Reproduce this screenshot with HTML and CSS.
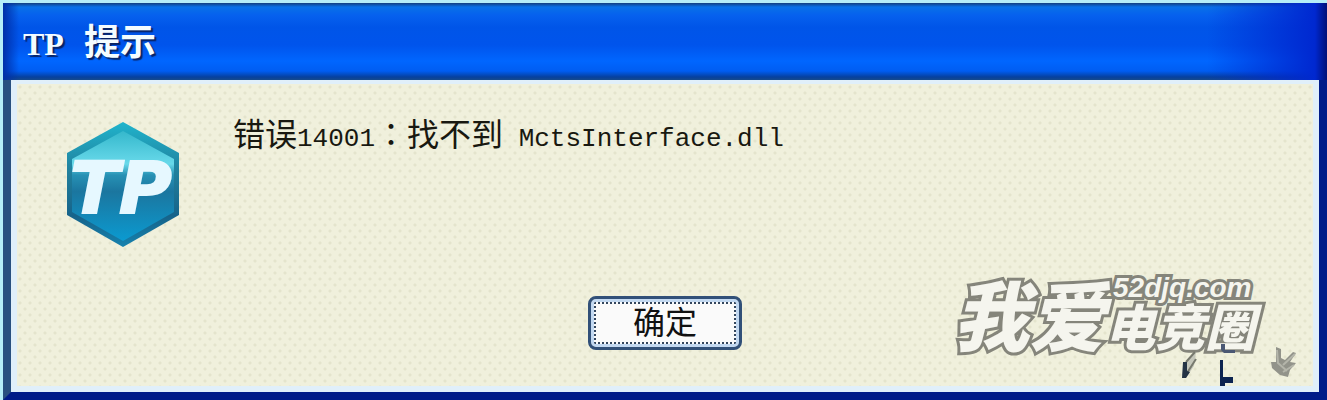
FILE: index.html
```html
<!DOCTYPE html>
<html lang="zh-CN">
<head>
	<meta charset="utf-8">
	<title>TP 提示</title>
	<link rel="stylesheet" href="styles.css">
</head>
<body>
	<div class="dialog">
		<header class="titlebar">
			<h1><span>TP</span> <span class="title-cn">提示</span></h1>
		</header>
		<main class="content">
			<div class="info">
				<svg class="logo" viewBox="0 0 116 128" aria-hidden="true">
					<defs>
						<linearGradient id="edge" x1="0" y1="0" x2="0" y2="1">
							<stop offset="0" stop-color="#20b4cc"/>
							<stop offset="0.4" stop-color="#217f9c"/>
							<stop offset="0.75" stop-color="#16638a"/>
							<stop offset="1" stop-color="#1682ae"/>
						</linearGradient>
						<linearGradient id="face" x1="0" y1="0" x2="0" y2="1">
							<stop offset="0" stop-color="#35b8cc"/>
							<stop offset="0.3" stop-color="#68d9ea"/>
							<stop offset="0.4" stop-color="#2791b4"/>
							<stop offset="0.55" stop-color="#1b769f"/>
							<stop offset="1" stop-color="#0b9ad0"/>
						</linearGradient>
					</defs>
					<path d="M58 2 114 33V95L58 127 2 95V33Z" fill="url(#edge)"/>
					<path d="M58 11 109 39V92L58 121 7 92V39Z" fill="url(#face)"/>
					<text class="logo-text" x="5" y="93">TP</text>
				</svg>
				<p class="message"><span class="cn">错误</span>14001<span class="cn colon" lang="zh-TW">：</span><span class="cn">找不到</span> MctsInterface.dll</p>
			</div>
			<button class="ok" type="button">确定</button>
		</main>
		<div class="watermark">
			<span class="wm-big">我爱</span>
			<span class="wm-side">
				<span class="wm-url">52djq.com</span>
				<span class="wm-small">电竞圈</span>
			</span>
		</div>
		<svg class="marks" viewBox="0 -8 120 50" aria-hidden="true">
			<path d="M17 2 7 12 3 25 7 28 15 16Z" fill="#c5c7bb"/>
			<path d="M16 2 7 12M17 9 8 23" stroke="#77796e" stroke-width="2"/>
			<path d="M4 12H8V21L11 22 7 28H3Z" fill="#243345"/>
			<path d="M42 -6H46V0H56V3H45L42 0Z" fill="#4b5874"/>
			<path d="M41 10H44V27H54V33H46V36H41Z" fill="#0c2350"/>
			<path d="M97 -3 102 -1 102 8 106 10 114 2 117 3 111 12 117 13 111 20 109 27 101 25 93 18 92 12 97 12Z" fill="#92938a"/>
			<path d="M98 0 99 13 108 21M116 4 104 15M115 15 104 22" fill="none" stroke="#b4b5aa" stroke-width="2"/>
		</svg>
	</div>
</body>
</html>
```
FILE: styles.css
```css
*{
	box-sizing:border-box;
}
body{
	margin:0;
	background:#b5eef8;
	font-family:"Liberation Mono","Noto Sans CJK SC",monospace;
}
.dialog{
	position:relative;
	display:flex;
	flex-direction:column;
	min-height:calc(100vh - 3px);
	margin:3px 0 0 3px;
	border:8px solid #001b88;
	border-top:0;
	border-left-color:#285080;
	background:#001b88;
}
.titlebar{
	margin:0 -8px;
	padding:20px 20px 16px;
	background:linear-gradient(to right,#0030a8 0,transparent 16px,transparent calc(100% - 120px),#0028d0 calc(100% - 12px),#001078),
		linear-gradient(#123f80 0,#0871e8 4px,#0661ee 12px,#0055e8 24px,#0054ec 42px,#0066ff 58px,#005df2 68px,#06409e 74px,#174b8c);
}
h1{
	display:flex;
	align-items:baseline;
	gap:20px;
	margin:0;
	color:#f4fcff;
	font-family:"Liberation Serif","Noto Sans CJK SC",serif;
	font-size:32px;
	line-height:40px;
	font-weight:bold;
	text-shadow:2px 2px 1px #082365;
}
.title-cn{
	font-size:36px;
}
.content{
	flex:1;
	display:flex;
	flex-direction:column;
	justify-content:space-between;
	align-items:center;
	gap:40px;
	padding:36px 48px;
	border:6px solid #e0effa;
	border-top-width:4px;
	background:radial-gradient(circle at 3px 3px,#e4e4cc 1px,transparent 2px) 0 0/10px 12px,
		radial-gradient(circle at 8px 9px,#e4e4cc 1px,transparent 2px) 0 0/10px 12px,
		#f0f0dc;
}
.info{
	display:flex;
	align-items:flex-start;
	gap:52px;
	width:100%;
}
.logo{
	flex:none;
	width:116px;
	height:128px;
}
.logo-text{
	fill:#e6f8ff;
	stroke:#e6f8ff;
	stroke-width:2px;
	font:italic bold 72px "DejaVu Sans",sans-serif;
}
.message{
	margin:0;
	color:#181810;
	font-size:26px;
	line-height:24px;
}
.cn{
	font-family:"Noto Sans CJK SC",sans-serif;
	font-size:32px;
}
.colon{
	font-family:"Noto Sans CJK TC",sans-serif;
}
.ok{
	width:154px;
	height:54px;
	padding:0 0 6px;
	border:3px solid #315078;
	border-radius:8px;
	outline:2px dotted #33465e;
	outline-offset:-8px;
	background:#fafafa;
	box-shadow:inset 0 0 0 3px #c3d9f1;
	color:#111;
	font:32px "Noto Sans CJK SC",sans-serif;
	line-height:40px;
}
.watermark{
	position:absolute;
	right:64px;
	bottom:44px;
	display:flex;
	align-items:flex-end;
	color:#f5f5ee;
	font-family:"Noto Sans CJK SC",sans-serif;
	font-style:italic;
	font-weight:900;
	-webkit-text-stroke:6px #85857b;
	paint-order:stroke fill;
}
.wm-big{
	font-size:76px;
	line-height:72px;
}
.wm-side{
	display:flex;
	flex-direction:column;
}
.wm-url{
	padding-left:8px;
	font-family:"Liberation Sans",sans-serif;
	font-size:28px;
	line-height:24px;
}
.wm-small{
	font-size:50px;
	line-height:48px;
}
.marks{
	position:absolute;
	right:20px;
	bottom:0;
	width:120px;
	height:50px;
	overflow:visible;
}
```
